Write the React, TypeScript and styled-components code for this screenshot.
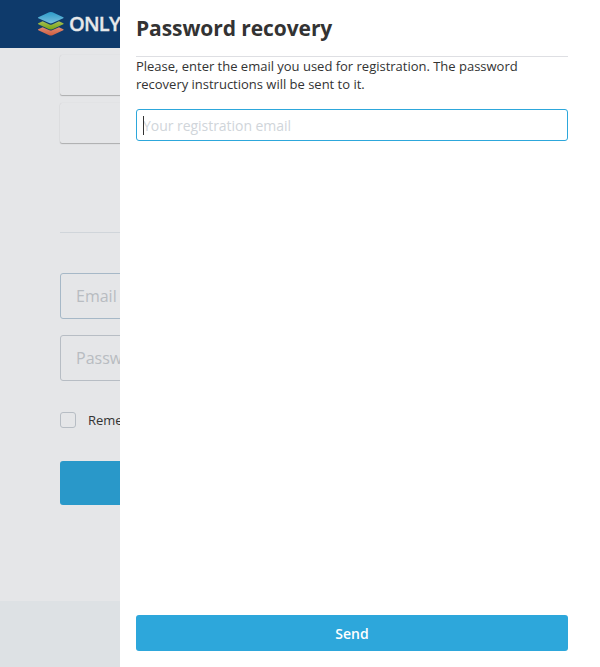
import React from "react";
import styled, { createGlobalStyle } from "styled-components";

const GlobalStyle = createGlobalStyle`
  * { box-sizing: border-box; }
  body {
    margin: 0;
    overflow: hidden;
    font-family: "Open Sans", "Liberation Sans", sans-serif;
    color: #333;
  }
  input, button { font-family: inherit; }
`;

const Page = styled.div`
  display: flex;
  flex-direction: column;
  height: 100vh;
  background: #e5e6e8;
`;

const Header = styled.header`
  display: flex;
  align-items: center;
  flex: 0 0 48px;
  padding-left: 37px;
  background: #0e3a6b;
`;

const LogoMark = styled.svg`
  display: block;
  width: 28px;
  height: 26px;
`;

const LogoText = styled.span`
  margin-left: 4px;
  font-size: 20px;
  line-height: 26px;
  font-weight: 600;
  letter-spacing: -0.8px;
  color: #e6e8ea;
  -webkit-text-stroke: 0.3px #e6e8ea;
`;

const LoginArea = styled.main`
  flex: 1;
  display: flex;
  flex-direction: column;
  padding: 7px 60px 0;
`;

const SocialList = styled.div`
  display: flex;
  flex-direction: column;
  gap: 8px;
`;

const SocialButton = styled.button`
  height: 40px;
  padding: 0;
  border: 0;
  border-radius: 2px;
  background: #e5e6e8;
  box-shadow: 0 1px 1px rgba(0, 0, 0, 0.24), 0 0 1px rgba(0, 0, 0, 0.12);
`;

const Divider = styled.hr<{ $space?: number; $color?: string }>`
  width: 100%;
  height: 1px;
  margin: ${({ $space = 0 }) => $space}px 0 0;
  border: 0;
  background: ${({ $color = "#d0d5da" }) => $color};
`;

const Fields = styled.div`
  display: flex;
  flex-direction: column;
  gap: 16px;
  margin-top: 40px;
`;

const LoginInput = styled.input<{ $active?: boolean }>`
  height: 46px;
  padding: 0 15px;
  border: 1px solid ${({ $active }) => ($active ? "#a6b8c7" : "#b7bdc4")};
  border-radius: 3px;
  background: transparent;
  font-size: 16px;
  &::placeholder { color: #b8bcc1; opacity: 1; }
`;

const Remember = styled.label`
  display: flex;
  align-items: center;
  gap: 12px;
  height: 20px;
  margin-top: 29px;
  font-size: 13px;
`;

const CheckBox = styled.span`
  width: 16px;
  height: 16px;
  border: 1px solid #b7bdc4;
  border-radius: 3px;
`;

const SignIn = styled.button`
  height: 44px;
  margin-top: 31px;
  border: 0;
  border-radius: 3px;
  background: #2998c9;
`;

const Footer = styled.footer`
  flex: 0 0 66px;
  background: #dde1e4;
`;

const Aside = styled.aside`
  position: fixed;
  inset: 0 0 0 120px;
  display: flex;
  flex-direction: column;
  padding: 0 32px 16px 16px;
  background: #fff;
`;

const Title = styled.h1`
  height: 56px;
  margin: 0;
  font-size: 21px;
  line-height: 56px;
  font-weight: 700;
  letter-spacing: -0.08px;
`;

const AsideBody = styled.div`
  flex: 1;
`;

const Hint = styled.p`
  margin: 0;
  font-size: 13px;
  line-height: 18px;
  letter-spacing: -0.01px;
`;

const EmailField = styled.div`
  position: relative;
  display: flex;
  margin-top: 16px;
`;

const EmailInput = styled.input`
  width: 100%;
  height: 32px;
  padding: 0 6px;
  border: 1px solid #2da7db;
  border-radius: 3px;
  outline: none;
  background: #fff;
  font-size: 14px;
  letter-spacing: -0.04px;
  &::placeholder { color: #d0d5da; opacity: 1; }
`;

const Caret = styled.span`
  position: absolute;
  left: 7px;
  top: 7px;
  width: 1px;
  height: 19px;
  background: #333;
`;

const SendButton = styled.button`
  height: 36px;
  padding: 0;
  border: 0;
  border-radius: 3px;
  background: #2da7db;
  color: #fff;
  font-size: 14px;
  font-weight: 600;
`;

function Logo() {
  return (
    <LogoMark viewBox="0 0 28 26">
      <defs>
        <linearGradient id="blue" x1="0" y1="0" x2="0" y2="1">
          <stop offset="0" stopColor="#2c9cc9" />
          <stop offset="1" stopColor="#79bfdc" />
        </linearGradient>
        <linearGradient id="green" x1="0" y1="0" x2="0" y2="1">
          <stop offset="0" stopColor="#a5bd55" />
          <stop offset="1" stopColor="#77a511" />
        </linearGradient>
        <linearGradient id="red" x1="0" y1="0" x2="0" y2="1">
          <stop offset="0" stopColor="#df8c73" />
          <stop offset="1" stopColor="#cf5c3e" />
        </linearGradient>
      </defs>
      <path fill="url(#red)" d="M1.3 18.2 5.6 16.2l6.9 3q1.3.6 2.6 0l6.9-3 4.3 2q.8.5 0 1l-10.8 5q-1.7.8-3.4 0L1.3 19.2q-.8-.5 0-1Z" />
      <path fill="url(#green)" d="M1.3 12.2 5.6 10.3l6.9 3.1q1.3.6 2.6 0l6.9-3.1 4.3 1.9q.8.5 0 1l-10.8 5q-1.7.8-3.4 0L1.3 13.2q-.8-.5 0-1Z" />
      <path fill="url(#blue)" d="M1.3 6.2 12.1 1.3q1.7-.8 3.4 0l10.8 4.9q.8.5 0 1l-10.8 4.8q-1.7.8-3.4 0L1.3 7.2q-.8-.5 0-1Z" />
    </LogoMark>
  );
}

export default function App() {
  return (
    <>
      <GlobalStyle />
      <Page>
        <Header>
          <Logo />
          <LogoText>ONLY</LogoText>
        </Header>
        <LoginArea>
          <SocialList>
            <SocialButton />
            <SocialButton />
          </SocialList>
          <Divider $space={89} />
          <Fields>
            <LoginInput $active placeholder="Email" />
            <LoginInput placeholder="Password" type="password" />
          </Fields>
          <Remember>
            <CheckBox />
            Remember
          </Remember>
          <SignIn />
        </LoginArea>
        <Footer />
      </Page>
      <Aside>
        <Title>Password recovery</Title>
        <Divider $color="#dedfe3" />
        <AsideBody>
          <Hint>
            Please, enter the email you used for registration. The password
            recovery instructions will be sent to it.
          </Hint>
          <EmailField>
            <EmailInput type="email" placeholder="Your registration email" />
            <Caret />
          </EmailField>
        </AsideBody>
        <SendButton>Send</SendButton>
      </Aside>
    </>
  );
}
